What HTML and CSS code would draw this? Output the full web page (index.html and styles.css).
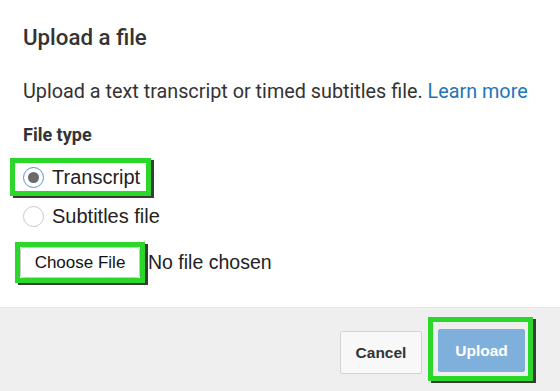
FILE: index.html
```html
<!DOCTYPE html>
<html>
<head>
<meta charset="utf-8">
<link rel="stylesheet" href="styles.css">
</head>
<body>
<div class="dialog">
  <div class="content">
    <h2 class="title">Upload a file</h2>
    <p class="desc">Upload a text transcript or timed subtitles file. <a class="link" href="#">Learn more</a></p>
    <div class="label">File type</div>
    <div class="radios">
      <div class="hl hl-radio">
        <label class="radio-row"><input class="radio" type="radio" name="t" checked><span>Transcript</span></label>
      </div>
      <label class="radio-row plain"><input class="radio" type="radio" name="t"><span>Subtitles file</span></label>
    </div>
    <div class="file-row">
      <div class="hl hl-file"><button class="choose">Choose File</button></div>
      <span class="nofile">No file chosen</span>
    </div>
  </div>
  <div class="footer">
    <button class="btn cancel">Cancel</button>
    <div class="hl hl-upload"><button class="btn upload">Upload</button></div>
  </div>
</div>
</body>
</html>
```
FILE: styles.css
```css
* { box-sizing: border-box; }
html, body { margin: 0; padding: 0; background: #fff; }
body { width: 560px; height: 391px; overflow: hidden; font-family: Roboto, "Liberation Sans", sans-serif; color: #333; }
.dialog { display: flex; flex-direction: column; height: 391px; }
.content { flex: 1; padding: 24px 23px 0; }
.title { margin: 0; font-size: 22.3px; font-weight: 500; line-height: 26px; color: #333; }
.desc { margin: 30px 0 0; font-size: 19.8px; line-height: 24px; color: #333; white-space: nowrap; }
.link { color: #1f75b9; text-decoration: none; }
.label { margin-top: 20px; font-size: 18px; font-weight: 700; line-height: 22px; color: #333; }
.radios { display: flex; flex-direction: column; margin-top: 12px; }
.hl { border: 5px solid #2ad82a; box-shadow: 3px 2px 0 #3a3a3a; display: inline-flex; align-items: center; }
.hl-radio { align-self: flex-start; margin-left: -13px; padding: 0 6px 0 8px; height: 38px; }
.radio-row { display: flex; align-items: center; gap: 8px; font-family: "Liberation Sans", Arial, sans-serif; font-size: 20px; color: #222; }
.radio-row.plain { height: 38px; margin-top: 1px; }
.radio { appearance: none; -webkit-appearance: none; margin: 0; width: 21px; height: 21px; border-radius: 50%; border: 1px solid #c8c8c8; background: #fff; display: grid; place-items: center; }
.radio:checked { border-color: #5d8fc9; }
.radio:checked::after { content: ""; width: 11px; height: 11px; border-radius: 50%; background: #6a6a6a; }
.file-row { display: flex; align-items: center; margin-top: 7px; margin-left: -8px; }
.hl-file { height: 41px; }
.choose { font-family: "Liberation Sans", Arial, sans-serif; font-size: 17px; color: #111; background: #fff; border: 1px solid #c9c9c9; border-radius: 3px; height: 31px; width: 120px; padding: 0; margin: 0; }
.nofile { margin-left: 3px; font-family: "Liberation Sans", Arial, sans-serif; font-size: 19.5px; color: #222; }
.footer { height: 84px; background: #efefef; border-top: 1px solid #e8e8e8; display: flex; align-items: flex-start; justify-content: flex-end; gap: 6px; padding: 9px 27px 0 0; }
.btn { font-family: "Liberation Sans", Arial, sans-serif; font-weight: 700; font-size: 15.5px; height: 43px; border-radius: 2px; margin: 0; }
.cancel { width: 82px; margin-top: 14px; background: #f8f8f8; border: 1px solid #d3d3d3; color: #333; }
.hl-upload { padding: 7px 3px 4px 5px; height: 64px; width: 105px; }
.upload { width: 87px; background: #7fb0dc; border: 1px solid #7fb0dc; color: #fff; }
```
